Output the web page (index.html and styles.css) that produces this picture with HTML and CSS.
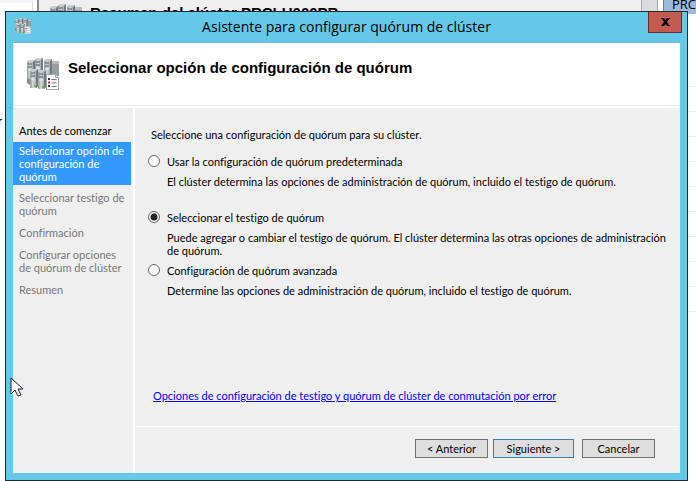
FILE: index.html
```html
<!DOCTYPE html>
<html lang="es">
<head>
    <meta charset="UTF-8">
    <meta name="viewport" content="width=device-width, initial-scale=1.0">
    <title>Asistente para configurar quórum de clúster</title>
    <link rel="stylesheet" href="styles.css">
</head>
<body>
    <!-- icon shared by every title -->
    <svg class="defs" width="0" height="0" aria-hidden="true">
        <defs>
            <linearGradient id="metal" x1="0" x2="1">
                <stop offset="0" stop-color="#8f979b"/>
                <stop offset="0.35" stop-color="#d3d9db"/>
                <stop offset="0.75" stop-color="#a5adb1"/>
                <stop offset="1" stop-color="#686f73"/>
            </linearGradient>
            <g id="server">
                <path d="M0 2l2-2h6v17l-2 2H0z" fill="url(#metal)"/>
                <path d="M6 2l2-2v17l-2 2z" fill="#737b80"/>
                <path d="M0 2l2-2h6L6 2z" fill="#c6cccf"/>
                <path d="M1 4h4M1 7h4" stroke="#515b61"/>
                <path d="M1 10h4" stroke="#f2f4f5"/>
            </g>
            <symbol id="cluster" viewBox="0 0 32 32">
                <path d="M24 3h8v15h-8z" fill="#969ea1"/>
                <path d="M24 3h8v3h-8z" fill="#b6bcbf"/>
                <use href="#server" x="0" y="2"/>
                <use href="#server" x="8" y="0"/>
                <use href="#server" x="17" y="1"/>
                <path d="M0 20l3 1v6l-3-2z" fill="#868e92"/>
                <use href="#server" x="3" y="11"/>
                <use href="#server" x="11" y="12"/>
                <path d="M7 28h2M15 29h2" stroke="#55c520" stroke-width="2"/>
                <path d="M19.500 16.500h9l3 3v12h-12z" fill="#fff" stroke="#a5a5a5"/>
                <path d="M28.500 16.500v3h3" fill="#ddd" stroke="#a5a5a5"/>
                <path d="M21 21h2M21 28h2" stroke="#34344c" stroke-width="2"/>
                <path d="M21 24.500h2" stroke="#e02030" stroke-width="2"/>
                <path d="M24.500 21.500h5M24.500 25h5M24.500 28.500h5" stroke="#777789"/>
            </symbol>
        </defs>
    </svg>

    <div class="backdrop">
        <div class="back-tree"><span class="back-letter">r</span></div>
        <div class="back-main">
            <svg class="back-icon"><use href="#cluster"/></svg>
            <span>Resumen del clúster PRCLU000PR</span>
        </div>
        <div class="back-scroll"></div>
        <div class="back-actions">
            <div class="back-head">PRC</div>
            <div class="back-rows"></div>
        </div>
    </div>

    <div class="window">
        <div class="titlebar">
            <svg class="title-icon"><use href="#cluster"/></svg>
            <span class="title-text">Asistente para configurar quórum de clúster</span>
            <button type="button" class="close" aria-label="Cerrar">
                <svg width="9" height="8" viewBox="0 0 9 8"><path d="M0 0h3l1.500 2L6 0h3L6 4l3 4H6L4.500 6 3 8H0l3-4z" fill="#000"/></svg>
            </button>
        </div>

        <div class="client">
            <div class="banner">
                <svg class="banner-icon"><use href="#cluster"/></svg>
                <h1>Seleccionar opción de configuración de quórum</h1>
            </div>

            <div class="columns">
                <ul class="steps">
                    <li class="done">Antes de comenzar</li>
                    <li class="current">Seleccionar opción de configuración de<br>quórum</li>
                    <li>Seleccionar testigo de quórum</li>
                    <li>Confirmación</li>
                    <li>Configurar opciones<br>de quórum de clúster</li>
                    <li>Resumen</li>
                </ul>

                <form class="page">
                    <div class="options">
                        <p class="intro">Seleccione una configuración de quórum para su clúster.</p>

                        <div class="option">
                            <input type="radio" id="default" name="quorum">
                            <label for="default">Usar la configuración de quórum predeterminada</label>
                            <p>El clúster determina las opciones de administración de quórum, incluido el testigo de quórum.</p>
                        </div>
                        <div class="option spaced">
                            <input type="radio" id="witness" name="quorum" checked>
                            <label for="witness">Seleccionar el testigo de quórum</label>
                            <p>Puede agregar o cambiar el testigo de quórum. El clúster determina las otras opciones de administración de quórum.</p>
                        </div>
                        <div class="option">
                            <input type="radio" id="advanced" name="quorum">
                            <label for="advanced">Configuración de quórum avanzada</label>
                            <p>Determine las opciones de administración de quórum, incluido el testigo de quórum.</p>
                        </div>

                        <a class="help" href="#">Opciones de configuración de testigo y quórum de clúster de conmutación por error</a>
                    </div>

                    <div class="buttons">
                        <button type="button">&lt; Anterior</button>
                        <button type="button" class="next">Siguiente &gt;</button>
                        <button type="button" class="cancel">Cancelar</button>
                    </div>
                </form>
            </div>
        </div>
    </div>

    <svg class="cursor" width="14" height="21" viewBox="0 0 14 21"><path d="M1 1v16l4-4 3 6 3-1-3-6h5z" fill="#fff" stroke="#1c1c30"/></svg>
</body>
</html>
```

FILE: styles.css
```css
* { box-sizing: border-box; }
body {
    margin: 0;
    min-height: 100vh;
    display: flex;
    padding: 11px 8px 0 5px;
    background: #fff;
    font-family: Lato, "Liberation Sans", sans-serif;
    font-size: 11px;
    font-variant-ligatures: none;
    line-height: 13px;
    color: #000;
}
h1, p, ul { margin: 0; padding: 0; }
.defs { position: absolute; }

/* console behind the wizard */
.backdrop { position: absolute; inset: 0; display: flex; overflow: hidden; }
.back-tree { width: 33px; border-top: 3px solid #f4f4f4; border-right: 1px solid #ddd; padding-top: 111px; }
.back-letter { display: block; margin-left: -2px; }
.back-main {
    flex: 1;
    display: flex;
    align-items: flex-start;
    gap: 8px;
    margin-left: 4px;
    padding: 4px 0 0 11px;
    background: #efefef;
    border-left: 2px solid #888;
    font-family: "Liberation Sans", Arial, sans-serif;
    font-size: 15px;
    font-weight: bold;
    line-height: 17px;
    white-space: nowrap;
}
.back-icon { width: 32px; height: 32px; }
.back-scroll { width: 17px; background: #dcdcdc; border: 1px solid #aaa; border-top: 0; margin-right: 5px; }
.back-actions { width: 33px; border-left: 1px solid #777; }
.back-head {
    height: 14px;
    padding-left: 8px;
    overflow: hidden;
    background: #9db9dc;
    font-family: "Open Sans", sans-serif;
    font-size: 13px;
    line-height: 8px;
}
.back-rows { height: 260px; margin-top: 48px; background: repeating-linear-gradient(#fff 0 24px, #ececec 24px 25px); }

.window {
    position: relative;
    flex: 1;
    display: flex;
    flex-direction: column;
    padding: 0 7px 7px;
    background: #64c8e8;
    border: 1px solid #202830;
}
.titlebar { display: flex; align-items: flex-start; height: 30px; }
.title-icon { width: 16px; height: 16px; margin: 6px 0 0 2px; }
.title-text {
    flex: 1;
    padding-left: 14px;
    text-align: center;
    font-family: "Open Sans", "Segoe UI", sans-serif;
    font-size: 14px;
    line-height: 30px;
}
.close {
    display: flex;
    align-items: center;
    justify-content: center;
    width: 34px;
    height: 21px;
    margin-right: -2px;
    padding: 0;
    background: #c45a50;
    border: 1px solid #5b2f35;
    border-top: 0;
}

.client { flex: 1; display: flex; flex-direction: column; background: #efefef; }
.banner {
    display: flex;
    gap: 9px;
    height: 66px;
    padding: 15px 14px 0;
    background: #fff;
    border-top: 1px solid #7db4c8;
    box-shadow: inset 0 -2px #fff, inset 0 -3px #ececec;
}
.banner-icon { width: 32px; height: 32px; }
h1 {
    font-family: "Liberation Sans", Arial, sans-serif;
    font-size: 15px;
    line-height: 20px;
}

.columns { flex: 1; display: flex; }
.steps {
    width: 122px;
    padding: 14px 2px 0 0;
    border-right: 2px solid #fff;
    list-style: none;
    color: #777;
}
.steps li { margin-bottom: 5px; padding: 2px 2px 2px 6px; }
.steps .done { margin-bottom: 3px; color: #000; }
.steps .current { margin-bottom: 4px; background: #3399ff; color: #fff; }

.page { flex: 1; display: flex; flex-direction: column; }
.options { flex: 1; display: flex; flex-direction: column; padding: 20px 8px 24px 13px; }
.intro { margin: 0 0 14px 3px; }
.option {
    display: grid;
    grid-template-columns: 12px 1fr;
    column-gap: 7px;
    row-gap: 7px;
    margin-bottom: 7px;
}
.option p { grid-column: 2; }
.spaced { margin-top: 16px; }
.option input {
    appearance: none;
    width: 12px;
    height: 12px;
    margin: 0;
    background: #fff;
    border: 1px solid #666;
    border-radius: 50%;
}
.option input:checked { background: radial-gradient(circle, #222 0 3px, #fff 4px); }
.help { align-self: flex-start; margin: auto 0 0 5px; color: #0000ff; }

.buttons {
    display: flex;
    justify-content: flex-end;
    gap: 5px;
    padding: 12px 25px 15px;
    border-top: 1px solid #fff;
}
.buttons button {
    width: 73px;
    height: 19px;
    padding: 0;
    background: #dedede;
    border: 1px solid #707070;
    font: inherit;
    color: #000;
}
.buttons .next { width: 81px; border-color: #3c7fb1; }
.buttons .cancel { margin-left: 3px; }

.cursor { position: absolute; left: 10px; top: 377px; }
```
